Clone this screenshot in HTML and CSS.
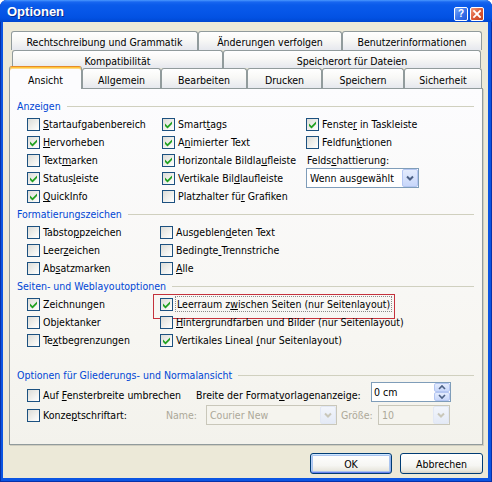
FILE: index.html
```html
<!DOCTYPE html>
<html lang="de">
<head>
<meta charset="utf-8">
<title>Optionen</title>
<link rel="stylesheet" href="styles.css">
</head>
<body>
<div class="window">
  <div class="titlebar">
    <span class="title">Optionen</span>
    <div class="caption-buttons">
      <span class="cap help">?</span>
      <span class="cap close"><svg viewBox="0 0 12 12" width="12" height="12"><path d="M3 3 L9 9 M9 3 L3 9" stroke="#fff" stroke-width="1.8" stroke-linecap="square"/></svg></span>
    </div>
  </div>
  <div class="client">
    <div class="tabs">
      <div class="tabrow row1">
        <div class="tab w187">Rechtschreibung und Grammatik</div>
        <div class="tab w144">Änderungen verfolgen</div>
        <div class="tab w140">Benutzerinformationen</div>
      </div>
      <div class="tabrow row2">
        <div class="tab w211">Kompatibilität</div>
        <div class="tab w258">Speicherort für Dateien</div>
      </div>
      <div class="tabrow row3">
        <div class="tab selected w73">Ansicht</div>
        <div class="tab w79">Allgemein</div>
        <div class="tab w86">Bearbeiten</div>
        <div class="tab w75">Drucken</div>
        <div class="tab w82">Speichern</div>
        <div class="tab w78">Sicherheit</div>
      </div>
    </div>

    <div class="panel">
      <div class="ghead"><span>Anzeigen</span></div>
      <div class="grid g1">
        <label class="item"><span class="cb"></span><span class="lbl"><u>S</u>tartaufgabenbereich</span></label>
        <label class="item"><span class="cb"><svg viewBox="0 0 11 11" width="11" height="11"><path d="M2 4.5 L4.5 7 L9 2.5 V5 L4.5 9.5 L2 7 Z"/></svg></span><span class="lbl">Smart<u>t</u>ags</span></label>
        <label class="item"><span class="cb"><svg viewBox="0 0 11 11" width="11" height="11"><path d="M2 4.5 L4.5 7 L9 2.5 V5 L4.5 9.5 L2 7 Z"/></svg></span><span class="lbl">Fenste<u>r</u> in Taskleiste</span></label>

        <label class="item"><span class="cb"><svg viewBox="0 0 11 11" width="11" height="11"><path d="M2 4.5 L4.5 7 L9 2.5 V5 L4.5 9.5 L2 7 Z"/></svg></span><span class="lbl"><u>H</u>ervorheben</span></label>
        <label class="item"><span class="cb"><svg viewBox="0 0 11 11" width="11" height="11"><path d="M2 4.5 L4.5 7 L9 2.5 V5 L4.5 9.5 L2 7 Z"/></svg></span><span class="lbl">A<u>n</u>imierter Text</span></label>
        <label class="item"><span class="cb"></span><span class="lbl">Feldfun<u>k</u>tionen</span></label>

        <label class="item"><span class="cb"></span><span class="lbl">Text<u>m</u>arken</span></label>
        <label class="item"><span class="cb"><svg viewBox="0 0 11 11" width="11" height="11"><path d="M2 4.5 L4.5 7 L9 2.5 V5 L4.5 9.5 L2 7 Z"/></svg></span><span class="lbl">Horizontale Bildla<u>u</u>fleiste</span></label>
        <div class="plain">Felds<u>c</u>hattierung:</div>

        <label class="item"><span class="cb"><svg viewBox="0 0 11 11" width="11" height="11"><path d="M2 4.5 L4.5 7 L9 2.5 V5 L4.5 9.5 L2 7 Z"/></svg></span><span class="lbl">Status<u>l</u>eiste</span></label>
        <label class="item"><span class="cb"><svg viewBox="0 0 11 11" width="11" height="11"><path d="M2 4.5 L4.5 7 L9 2.5 V5 L4.5 9.5 L2 7 Z"/></svg></span><span class="lbl">Vertikale Bil<u>d</u>laufleiste</span></label>
        <div class="combo shade"><span class="ctext">Wenn ausgewählt</span><span class="dd"><svg viewBox="0 0 14 16" width="14" height="16"><path d="M4 6.5 L7 9.5 L10 6.5" fill="none" stroke="#4D6185" stroke-width="2"/></svg></span></div>

        <label class="item"><span class="cb"><svg viewBox="0 0 11 11" width="11" height="11"><path d="M2 4.5 L4.5 7 L9 2.5 V5 L4.5 9.5 L2 7 Z"/></svg></span><span class="lbl"><u>Q</u>uickInfo</span></label>
        <label class="item"><span class="cb"></span><span class="lbl">Platzhalter fü<u>r</u> Grafiken</span></label>
        <div></div>
      </div>

      <div class="ghead"><span>Formatierungszeichen</span></div>
      <div class="grid g2">
        <label class="item"><span class="cb"></span><span class="lbl">Tabsto<u>p</u>pzeichen</span></label>
        <label class="item"><span class="cb"></span><span class="lbl">Ausgeblen<u>d</u>eten Text</span></label>
        <label class="item"><span class="cb"></span><span class="lbl">Leer<u>z</u>eichen</span></label>
        <label class="item"><span class="cb"></span><span class="lbl">Bedingte<u> </u>Trennstriche</span></label>
        <label class="item"><span class="cb"></span><span class="lbl">Ab<u>s</u>atzmarken</span></label>
        <label class="item"><span class="cb"></span><span class="lbl"><u>A</u>lle</span></label>
      </div>

      <div class="ghead"><span>Seiten- und Weblayoutoptionen</span></div>
      <div class="grid g2">
        <label class="item"><span class="cb"><svg viewBox="0 0 11 11" width="11" height="11"><path d="M2 4.5 L4.5 7 L9 2.5 V5 L4.5 9.5 L2 7 Z"/></svg></span><span class="lbl">Zeichnun<u>g</u>en</span></label>
        <label class="item marked"><span class="cb"><svg viewBox="0 0 11 11" width="11" height="11"><path d="M2 4.5 L4.5 7 L9 2.5 V5 L4.5 9.5 L2 7 Z"/></svg></span><span class="lbl focus">Leerraum z<u>w</u>ischen Seiten (nur Seitenlayout)</span></label>
        <label class="item"><span class="cb"></span><span class="lbl">Ob<u>j</u>ektanker</span></label>
        <label class="item"><span class="cb"></span><span class="lbl"><u>H</u>intergrundfarben und Bilder (nur Seitenlayout)</span></label>
        <label class="item"><span class="cb"></span><span class="lbl">Te<u>x</u>tbegrenzungen</span></label>
        <label class="item"><span class="cb"><svg viewBox="0 0 11 11" width="11" height="11"><path d="M2 4.5 L4.5 7 L9 2.5 V5 L4.5 9.5 L2 7 Z"/></svg></span><span class="lbl">Vertikales Lineal <u>(</u>nur Seitenlayout)</span></label>
      </div>

      <div class="ghead g4"><span>Optionen für Gliederungs- und Normalansicht</span></div>
      <div class="row4 r4a">
        <label class="item wrap"><span class="cb"></span><span class="lbl">Auf <u>F</u>ensterbreite umbrechen</span></label>
        <div class="txt">Breite der Format<u>v</u>orlagenanzeige:</div>
        <div class="spin">
          <span class="stext">0 cm</span>
          <span class="spinbtns">
            <span class="sb"><svg viewBox="0 0 14 7" width="14" height="7"><path d="M4 5 L7 2 L10 5" fill="none" stroke="#4D6185" stroke-width="1.6"/></svg></span>
            <span class="sb"><svg viewBox="0 0 14 7" width="14" height="7"><path d="M4 2 L7 5 L10 2" fill="none" stroke="#4D6185" stroke-width="1.6"/></svg></span>
          </span>
        </div>
      </div>
      <div class="row4 r4b">
        <label class="item konz"><span class="cb"></span><span class="lbl">Konze<u>p</u>tschriftart:</span></label>
        <div class="dim name-lbl">Name:</div>
        <div class="combo disabled font"><span class="ctext">Courier New</span><span class="dd"><svg viewBox="0 0 14 16" width="14" height="16"><path d="M4 6.5 L7 9.5 L10 6.5" fill="none" stroke="#C9C7BA" stroke-width="2"/></svg></span></div>
        <div class="dim size-lbl">Größe:</div>
        <div class="combo disabled size"><span class="ctext">10</span><span class="dd"><svg viewBox="0 0 14 16" width="14" height="16"><path d="M4 6.5 L7 9.5 L10 6.5" fill="none" stroke="#C9C7BA" stroke-width="2"/></svg></span></div>
      </div>
    </div>

    <div class="btnrow">
      <button class="btn ok">OK</button>
      <button class="btn cancel">Abbrechen</button>
    </div>
  </div>
</div>
</body>
</html>
```
FILE: styles.css
```css
* { box-sizing: border-box; }
html, body { margin: 0; padding: 0; }
body {
  width: 492px;
  height: 482px;
  overflow: hidden;
  background: #ffffff;
  font-family: "DejaVu Sans Condensed", "Liberation Sans", sans-serif;
  font-size: 10.5px;
  color: #000;
}
u { text-decoration: underline; text-underline-offset: 1px; }

.window {
  width: 492px;
  height: 482px;
  display: flex;
  flex-direction: column;
  background: #0B55E2;
  border-radius: 7px 7px 0 0;
  overflow: hidden;
  box-shadow: inset 1px 0 #0831A8, inset -1px 0 #0831A8, inset 0 -1px #0831A8;
}

.titlebar {
  flex: none;
  height: 22px;
  display: flex;
  align-items: center;
  padding: 0 8px 0 7px;
  background: linear-gradient(#4A98FE 0px, #1866F0 2px, #0A5BEA 5px, #0656E8 12px, #0251E2 18px, #0046D0 22px);
}
.title {
  font-family: "Liberation Sans", sans-serif;
  font-weight: bold;
  font-size: 13px;
  color: #fff;
  text-shadow: 1px 1px #0A2A8F;
  padding-top: 1px;
}
.caption-buttons {
  margin-left: auto;
  display: flex;
  gap: 2px;
  padding-top: 5px;
}
.cap {
  width: 14px;
  height: 14px;
  border: 1px solid #fff;
  border-radius: 2px;
  display: flex;
  align-items: center;
  justify-content: center;
  color: #fff;
  font-family: "Liberation Sans", sans-serif;
  font-weight: bold;
  font-size: 10px;
}
.help { background: linear-gradient(135deg, #7AA8F8, #3A75EC 50%, #2158D8); }
.close { background: linear-gradient(135deg, #F09A7C, #DD5A38 50%, #C4401F); }

.client {
  flex: 1;
  margin: 0 4px 4px 3px;
  background: #ECE9D8;
  padding: 9px 5px 4px 6px;
  display: flex;
  flex-direction: column;
}

/* tabs */
.tabs { flex: none; display: flex; flex-direction: column; }
.tabrow { display: flex; flex: none; }
.row1 { height: 19px; margin-left: 2px; }
.row2 { height: 18px; margin-left: 3px; }
.row3 { height: 20px; align-items: flex-end; }
.tab {
  border: 1px solid #919B9C;
  border-bottom: none;
  border-radius: 3px 3px 0 0;
  background: linear-gradient(#FFFFFF, #F8F8F6 45%, #E6E8EE);
  display: flex;
  justify-content: center;
  align-items: center;
  white-space: nowrap;
}
.row1 .tab { height: 19px; padding-top: 2px; }
.row2 .tab { height: 18px; padding-top: 3px; }
.row3 .tab { height: 20px; padding-top: 3px; }
.row3 .tab.selected {
  height: 23px;
  margin-bottom: -1px;
  padding-top: 4px;
  position: relative;
  z-index: 2;
  background: #FCFCFE;
  border-top: 1px solid #E68B2C;
  box-shadow: inset 0 1px #FFC83C, inset 0 2px #FFD98A;
}
.w187 { width: 187px; } .w144 { width: 144px; } .w140 { width: 140px; }
.w211 { width: 211px; } .w258 { width: 258px; }
.w73 { width: 73px; } .w79 { width: 79px; } .w86 { width: 86px; }
.w75 { width: 75px; } .w82 { width: 82px; } .w78 { width: 78px; }

/* panel */
.panel {
  flex: none;
  height: 357px;
  border: 1px solid #919B9C;
  background: linear-gradient(#FCFCFE, #F7F6F2 70%, #F3F2EC);
  padding: 8px 8px 0 0;
  box-shadow: 1px 1px 0 #D0CEC0;
}
.ghead {
  height: 18px;
  display: flex;
  align-items: center;
  padding-left: 7px;
  color: #0046D5;
  white-space: nowrap;
}
.ghead::after {
  content: "";
  flex: 1;
  height: 1px;
  background: #D0D0BF;
  margin-left: 6px;
}
.ghead.g4 { height: 14px; margin-top: 19px; }

.grid {
  display: grid;
  grid-auto-rows: 18px;
  padding-left: 17px;
  align-items: center;
}
.g1 { grid-template-columns: 135px 144px auto; }
.g2 { grid-template-columns: 133px auto; }

.item {
  display: flex;
  align-items: center;
  gap: 3px;
  white-space: nowrap;
  position: relative;
}
.lbl { line-height: 14px; }
.plain { line-height: 14px; white-space: nowrap; padding-left: 1px; }

.cb {
  flex: none;
  width: 13px;
  height: 13px;
  border: 1px solid #1C5180;
  background: linear-gradient(135deg, #DCDCD7, #F2F2EF 60%, #FFFFFF);
  display: flex;
}
.cb svg { fill: #21A121; }

.marked::before {
  content: "";
  position: absolute;
  left: -7px;
  top: -3px;
  width: 240px;
  height: 23px;
  border: 1px solid #C4323C;
}
.focus { outline: 1px dotted #8A8A8A; outline-offset: 0; padding: 0 1px; }

/* combos */
.combo {
  height: 20px;
  border: 1px solid #7F9DB9;
  background: #fff;
  display: flex;
  align-items: center;
  white-space: nowrap;
}
.combo.shade { width: 113px; align-self: center; }
.ctext { padding-left: 3px; flex: 1; overflow: hidden; }
.dd {
  flex: none;
  width: 16px;
  height: 18px;
  border: 1px solid #B4C6F2;
  border-radius: 2px;
  background: linear-gradient(#E4ECFD, #C8D7FA);
  display: flex;
  align-items: center;
  justify-content: center;
}
.combo.disabled { border-color: #C9C7BA; background: #F5F4EE; color: #ACA899; }
.combo.disabled .dd { border-color: #E2E8F5; background: linear-gradient(#F2F5FB, #E4EAF6); }
.combo.font { width: 131px; }
.combo.size { width: 72px; }

/* bottom group rows */
.row4 {
  display: flex;
  height: 22px;
  padding-left: 17px;
  white-space: nowrap;
}
.r4a { align-items: flex-start; }
.r4b { align-items: center; }
.item.wrap { width: 169px; margin-top: 6px; }
.txt { width: 175px; margin-top: 6px; line-height: 14px; }
.spin {
  width: 80px;
  height: 20px;
  border: 1px solid #7F9DB9;
  background: #fff;
  display: flex;
  align-items: flex-start;
}
.stext { flex: 1; padding: 2px 0 0 2px; line-height: 14px; }
.spinbtns { display: flex; flex-direction: column; }
.sb {
  width: 16px;
  height: 9px;
  border: 1px solid #B4C6F2;
  border-radius: 2px;
  background: linear-gradient(#E4ECFD, #C8D7FA);
  display: flex;
  align-items: center;
  justify-content: center;
}
.item.konz { width: 139px; }
.dim { color: #ACA899; line-height: 14px; }
.name-lbl { width: 40px; }
.size-lbl { width: 37px; margin-left: 4px; }

/* buttons */
.btnrow {
  flex: none;
  display: flex;
  justify-content: flex-end;
  gap: 8px;
  margin-top: 8px;
  height: 21px;
}
.btn {
  height: 21px;
  border: 1px solid #003C74;
  border-radius: 3px;
  background: linear-gradient(#FFFFFF, #F6F6F3 60%, #E8E6DD 88%, #D6D0C5);
  font: inherit;
  color: #000;
  padding: 0;
  display: flex;
  align-items: center;
  justify-content: center;
}
.btn.ok {
  width: 82px;
  box-shadow: inset 0 1px #CEE7FF, inset 0 -1px #6982EE, inset 1px 0 #B5CEF5, inset -1px 0 #8FB0EA, inset 0 0 0 2px #A9C4F0;
}
.btn.cancel { width: 83px; }
```
